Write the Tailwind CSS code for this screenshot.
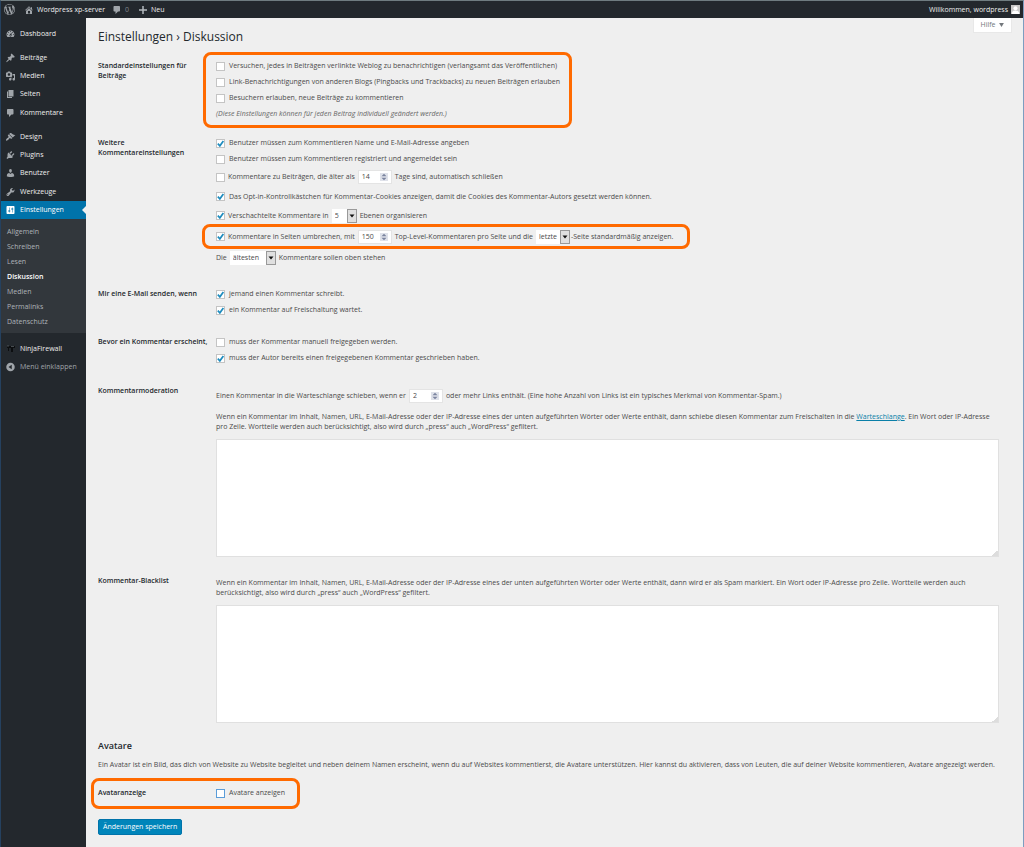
<!DOCTYPE html>
<html lang="de">
<head>
<meta charset="utf-8">
<meta name="viewport" content="width=device-width, initial-scale=1">
<title>Einstellungen › Diskussion</title>
<script src="https://cdn.jsdelivr.net/npm/@tailwindcss/browser@4"></script>
</head>
<body class="min-h-screen flex flex-col bg-[#efefef] border-x border-t border-t-[#6f7c80] border-l-[#25415f] border-r-[#7d9dc0] font-['Open_Sans','Noto_Sans',sans-serif] text-[7px] leading-[10px] text-[#4a4a4a]">

<svg class="hidden" aria-hidden="true">
  <symbol id="check" viewBox="0 0 10 10"><path d="M2 5.200L4.300 7.600L8.200 2.300" fill="none" stroke="#1e8cbe" stroke-width="1.900"/></symbol>
  <symbol id="spin" viewBox="0 0 8 8"><rect width="8" height="8" fill="#dfe2ea"/><path d="M4 .8L6.500 3.300h-5zM4 7.200L6.500 4.700h-5z" fill="#7c85a0"/></symbol>
  <symbol id="comment" viewBox="0 0 20 20"><path d="M5 2h9c1.1 0 2 .9 2 2v7c0 1.1-.9 2-2 2h-2l-5 5v-5H5c-1.1 0-2-.9-2-2V4c0-1.1.9-2 2-2z"/></symbol>
</svg>

<header class="h-[17px] bg-[#23282d] text-[#eee] flex items-center justify-between pl-[3px] pr-[3px]">
  <nav class="flex items-center" aria-label="Werkzeugleiste">
    <a href="#" aria-label="WordPress"><svg class="w-[11px] h-[11px] fill-[#a0a5aa]" viewBox="0 0 20 20"><path d="M20 10c0-5.510-4.490-10-10-10C4.480 0 0 4.490 0 10c0 5.520 4.480 10 10 10 5.510 0 10-4.480 10-10zM7.780 15.370L4.370 6.220c.55-.02 1.170-.08 1.170-.08.5-.06.44-1.130-.06-1.110 0 0-1.450.11-2.370.11-.18 0-.37 0-.58-.01C4.120 2.690 6.870 1.110 10 1.110c2.330 0 4.450.87 6.050 2.340-.68-.11-1.650.39-1.650 1.580 0 .74.45 1.360.9 2.100.35.61.55 1.360.55 2.460 0 1.490-1.400 5-1.400 5l-3.030-8.370c.54-.02.82-.17.82-.17.5-.05.44-1.250-.06-1.220 0 0-1.440.12-2.380.12-.87 0-2.330-.12-2.330-.12-.5-.03-.56 1.200-.06 1.220l.92.08 1.260 3.410zM17.410 10c.24-.64.74-1.870.43-4.250.7 1.290 1.050 2.710 1.050 4.250 0 3.290-1.730 6.240-4.400 7.780.97-2.590 1.940-5.200 2.920-7.780zM6.100 18.090C3.120 16.650 1.110 13.530 1.110 10c0-1.300.23-2.480.72-3.590C3.250 10.300 4.670 14.200 6.100 18.090zm4.030-6.630l2.580 6.980c-.86.29-1.760.45-2.710.45-.79 0-1.570-.11-2.290-.33.81-2.380 1.620-4.740 2.420-7.100z"/></svg></a>
    <a href="#" class="flex items-center gap-[3px] ml-[9px]"><svg class="w-[10px] h-[10px] fill-[#a0a5aa]" viewBox="0 0 20 20"><path d="M16 8.500l1.530 1.530-1.060 1.060L10 4.600l-6.470 6.490-1.060-1.060L10 2.500l4 4v-2h2v4zm-6-2.460l6 5.990V18H4v-5.970zM12 17v-5H8v5h4z"/></svg>Wordpress xp-server</a>
    <a href="#" class="flex items-center gap-[3px] ml-[7px] text-[#80868b]"><svg class="w-[10px] h-[10px] fill-[#a0a5aa]"><use href="#comment"/></svg>0</a>
    <a href="#" class="flex items-center gap-1 ml-[10px]"><svg class="w-[8px] h-[8px]" viewBox="0 0 8 8"><path d="M4 0v8M0 4h8" stroke="#b4b9be" stroke-width="1.500"/></svg>Neu</a>
  </nav>
  <a href="#" class="flex items-center gap-[3px]">Willkommen, wordpress<svg class="w-[9px] h-[9px]" viewBox="0 0 9 9"><rect width="9" height="9" fill="#c8c8c8"/><circle cx="4.500" cy="3.300" r="2" fill="#fff"/><path d="M.8 9c0-3 2-3.500 3.700-3.500S8.200 6 8.200 9z" fill="#fff"/></svg></a>
</header>

<div class="flex flex-1">
  <aside class="w-[85px] shrink-0 bg-[#23282d] text-[#eee] pt-[7px]">
    <nav class="flex flex-col" aria-label="Hauptmenü">
      <a href="#" class="flex items-center gap-1 h-[18px] pl-1 mb-[6px]"><svg class="w-[11px] h-[10px] fill-[#a0a5aa]" viewBox="0 0 20 20"><path d="M3.760 16h12.480c1.100-1.370 1.760-3.110 1.760-5 0-4.420-3.580-8-8-8s-8 3.580-8 8c0 1.890.66 3.630 1.760 5zM10 4c.55 0 1 .45 1 1s-.45 1-1 1-1-.45-1-1 .45-1 1-1zM6 6c.55 0 1 .45 1 1s-.45 1-1 1-1-.45-1-1 .45-1 1-1zm8 0c.55 0 1 .45 1 1s-.45 1-1 1-1-.45-1-1 .45-1 1-1zm-5.370 5.550L12 7v6c0 1.100-.9 2-2 2s-2-.9-2-2c0-.57.24-1.080.63-1.450zM4 10c.55 0 1 .45 1 1s-.45 1-1 1-1-.45-1-1 .45-1 1-1zm12 0c.55 0 1 .45 1 1s-.45 1-1 1-1-.45-1-1 .45-1 1-1zm-5 3c0-.55-.45-1-1-1s-1 .45-1 1 .45 1 1 1 1-.45 1-1z"/></svg>Dashboard</a>
      <a href="#" class="flex items-center gap-1 h-[18px] pl-1"><svg class="w-[11px] h-[10px] fill-[#a0a5aa]" viewBox="0 0 20 20"><path d="M10.440 3.020l1.820-1.820 6.360 6.350-1.830 1.820c-1.050-.68-2.480-.57-3.410.36l-.75.75c-.92.93-1.040 2.350-.35 3.410l-1.830 1.820-2.410-2.410-2.800 2.790c-.42.42-3.380 2.710-3.800 2.290s1.860-3.390 2.280-3.810l2.790-2.790L4.100 9.360l1.830-1.820c1.050.69 2.480.57 3.400-.36l.75-.75c.93-.92 1.050-2.350.36-3.410z"/></svg>Beiträge</a>
      <a href="#" class="flex items-center gap-1 h-[18px] pl-1"><svg class="w-[11px] h-[10px] fill-[#a0a5aa]" viewBox="0 0 20 20"><path d="M13 11V4c0-.55-.45-1-1-1h-1.670L9 1H5L3.670 3H2c-.55 0-1 .45-1 1v7c0 .55.45 1 1 1h10c.55 0 1-.45 1-1zM7 4.500c1.380 0 2.500 1.120 2.500 2.500S8.380 9.500 7 9.500 4.500 8.380 4.500 7 5.620 4.500 7 4.500zM14 6h5v10.500c0 1.380-1.120 2.500-2.500 2.500S14 17.880 14 16.500s1.120-2.500 2.500-2.500c.17 0 .34.02.5.05V9h-3V6zm-4 8.050V13h2v3.500c0 1.380-1.120 2.500-2.500 2.500S7 17.880 7 16.500 8.120 14 9.500 14c.17 0 .34.02.5.05z"/></svg>Medien</a>
      <a href="#" class="flex items-center gap-1 h-[18px] pl-1"><svg class="w-[11px] h-[10px] fill-[#a0a5aa]" viewBox="0 0 20 20"><path d="M6 15V2h10v13H6zm-1 1h8v2H3V5h2v11z"/></svg>Seiten</a>
      <a href="#" class="flex items-center gap-1 h-[19px] pl-1 mb-[6px]"><svg class="w-[11px] h-[10px] fill-[#a0a5aa]"><use href="#comment"/></svg>Kommentare</a>
      <a href="#" class="flex items-center gap-1 h-[18px] pl-1"><svg class="w-[11px] h-[10px] fill-[#a0a5aa]" viewBox="0 0 20 20"><path d="M14.480 11.060L7.410 3.990l1.500-1.500c.5-.56 2.300-.47 3.510.32 1.210.8 1.430 1.280 2.910 2.100 1.180.64 2.450 1.260 4.450.85zm-.71.71L6.700 4.700 4.930 6.470c-.39.39-.39 1.020 0 1.410l1.060 1.060c.39.39.39 1.030 0 1.420-.6.6-1.430 1.110-2.210 1.690-.35.26-.7.53-1.010.84C1.430 14.230.4 16.080 1.400 17.070c.99 1 2.840-.03 4.180-1.360.31-.31.58-.66.85-1.020.57-.78 1.080-1.610 1.690-2.210.39-.39 1.020-.39 1.410 0l1.060 1.060c.39.39 1.020.39 1.410 0z"/></svg>Design</a>
      <a href="#" class="flex items-center gap-1 h-[18px] pl-1"><svg class="w-[11px] h-[10px] fill-[#a0a5aa]" viewBox="0 0 20 20"><path d="M13.110 4.360L9.870 7.600 8 5.730l3.240-3.240c.35-.34 1.050-.2 1.560.32.52.51.66 1.210.31 1.550zm-8 1.770l.91-1.120 9.010 9.010-1.190.84c-.71.71-2.630 1.160-3.820 1.160H6.140L4.900 17.260c-.59.59-1.540.59-2.120 0-.59-.58-.59-1.530 0-2.120l1.240-1.240v-3.880c0-1.130.4-3.190 1.090-3.890zm7.260 3.970l3.240-3.240c.34-.35 1.040-.21 1.550.31.52.51.66 1.210.31 1.550l-3.240 3.250z"/></svg>Plugins</a>
      <a href="#" class="flex items-center gap-1 h-[18px] pl-1"><svg class="w-[11px] h-[10px] fill-[#a0a5aa]" viewBox="0 0 20 20"><path d="M10 9.250c-2.270 0-2.730-3.440-2.730-3.440C7 4.020 7.820 2 9.970 2c2.160 0 2.980 2.020 2.710 3.810 0 0-.41 3.440-2.680 3.440zm0 2.570L12.720 10c2.390 0 4.520 2.330 4.520 4.530v2.490s-3.650 1.130-7.240 1.130c-3.650 0-7.240-1.130-7.240-1.130v-2.490c0-2.250 1.940-4.480 4.470-4.480z"/></svg>Benutzer</a>
      <a href="#" class="flex items-center gap-1 h-[19px] pl-1"><svg class="w-[11px] h-[10px] fill-[#a0a5aa]" viewBox="0 0 20 20"><path d="M16.680 9.770c-1.340 1.340-3.300 1.670-4.950.99l-5.410 6.520c-.99.99-2.590.99-3.580 0s-.99-2.590 0-3.570l6.520-5.420c-.68-1.650-.35-3.610.99-4.950 1.280-1.280 3.120-1.620 4.720-1.060l-2.890 2.890 2.820 2.820 2.860-2.870c.53 1.580.18 3.390-1.080 4.650zM3.810 16.210c.4.39 1.040.39 1.430 0 .4-.4.4-1.040 0-1.430-.39-.4-1.030-.4-1.430 0-.39.39-.39 1.030 0 1.430z"/></svg>Werkzeuge</a>
      <a href="#" class="flex items-center gap-1 h-[18px] pl-1 bg-[#0073aa] text-white"><svg class="w-[11px] h-[10px] fill-white" viewBox="0 0 20 20"><path d="M18 16V4c0-1.100-.9-2-2-2H4c-1.100 0-2 .9-2 2v12c0 1.100.9 2 2 2h12c1.100 0 2-.9 2-2zM8 11h1c.55 0 1 .45 1 1s-.45 1-1 1H8v1.500c0 .28-.22.5-.5.5s-.5-.22-.5-.5V13H6c-.55 0-1-.45-1-1s.45-1 1-1h1V5.500c0-.28.22-.5.5-.5s.5.22.5.5V11zm5-2h-1c-.55 0-1-.45-1-1s.45-1 1-1h1V5.500c0-.28.22-.5.5-.5s.5.22.5.5V7h1c.55 0 1 .45 1 1s-.45 1-1 1h-1v5.500c0 .28-.22.5-.5.5s-.5-.22-.5-.5V9z"/></svg>Einstellungen<svg class="w-[4px] h-[8px] ml-auto" viewBox="0 0 4 8"><path d="M4 0v8L0 4z" fill="#efefef"/></svg></a>
      <div class="flex flex-col bg-[#32373c] text-[#aeb3b8] pt-[5px] pb-1 mb-[7px]">
        <a href="#" class="flex items-center h-[15px] pl-[6px]">Allgemein</a>
        <a href="#" class="flex items-center h-[15px] pl-[6px]">Schreiben</a>
        <a href="#" class="flex items-center h-[15px] pl-[6px]">Lesen</a>
        <a href="#" class="flex items-center h-[15px] pl-[6px] font-semibold text-white">Diskussion</a>
        <a href="#" class="flex items-center h-[15px] pl-[6px]">Medien</a>
        <a href="#" class="flex items-center h-[15px] pl-[6px]">Permalinks</a>
        <a href="#" class="flex items-center h-[15px] pl-[6px]">Datenschutz</a>
      </div>
      <a href="#" class="flex items-center gap-1 h-[18px] pl-1"><svg class="w-[11px] h-[10px]" viewBox="0 0 11 10"><path d="M2 2h8v2H8v4H6V4H4v3H3V4H2z" fill="#0c0e10"/><path d="M2 2h2M6 2.500h3" stroke="#62686d" stroke-width=".7"/></svg>NinjaFirewall</a>
      <button type="button" class="flex items-center gap-1 h-[18px] pl-1 text-[#a0a5aa]"><svg class="w-[11px] h-[10px]" viewBox="0 0 20 20"><circle cx="10" cy="10" r="8.500" fill="#a0a5aa"/><path d="M12.500 5.500v9L6 10z" fill="#23282d"/></svg>Menü einklappen</button>
    </nav>
  </aside>

  <main class="relative flex-1 pl-3 pr-6 pt-[11px] pb-3">
    <button type="button" class="absolute top-0 right-[11px] h-[15px] w-[39px] bg-white border border-t-0 border-[#e8e8e8] text-[#72777c] flex items-center justify-center gap-1">Hilfe<svg class="w-[5px] h-[4px]" viewBox="0 0 6 5"><path d="M0 0h6L3 5z" fill="#72777c"/></svg></button>
    <h1 class="text-[12px] leading-[16px] text-[#23282d] mb-[13px]">Einstellungen › Diskussion</h1>

    <form>
      <section class="grid grid-cols-[118px_1fr] mb-[13px]">
        <h2 class="pt-[3px] font-semibold text-[#23282d]">Standardeinstellungen für<br>Beiträge</h2>
        <div class="relative justify-self-start">
          <div class="absolute -top-[6px] -bottom-[6px] -left-[13px] -right-3 border-3 border-[#ff6a00] rounded-lg pointer-events-none"></div>
          <label class="flex items-center gap-1 h-4"><input type="checkbox" class="appearance-none w-[9px] h-[9px] bg-white border border-[#c4c4c4]">Versuchen, jedes in Beiträgen verlinkte Weblog zu benachrichtigen (verlangsamt das Veröffentlichen)</label>
          <label class="flex items-center gap-1 h-4"><input type="checkbox" class="appearance-none w-[9px] h-[9px] bg-white border border-[#c4c4c4]">Link-Benachrichtigungen von anderen Blogs (Pingbacks und Trackbacks) zu neuen Beiträgen erlauben</label>
          <label class="flex items-center gap-1 h-4"><input type="checkbox" class="appearance-none w-[9px] h-[9px] bg-white border border-[#c4c4c4]">Besuchern erlauben, neue Beiträge zu kommentieren</label>
          <p class="flex items-center h-4 italic text-[#666]">(Diese Einstellungen können für jeden Beitrag individuell geändert werden.)</p>
        </div>
      </section>

      <section class="grid grid-cols-[118px_1fr] mb-[18px]">
        <h2 class="pt-[3px] font-semibold text-[#23282d]">Weitere<br>Kommentareinstellungen</h2>
        <div class="flex flex-col items-start">
          <label class="flex items-center gap-1 h-4"><span class="grid"><input type="checkbox" checked class="appearance-none col-start-1 row-start-1 w-[9px] h-[9px] bg-white border border-[#c4c4c4]"><svg class="col-start-1 row-start-1 w-[9px] h-[9px]"><use href="#check"/></svg></span>Benutzer müssen zum Kommentieren Name und E-Mail-Adresse angeben</label>
          <label class="flex items-center gap-1 h-4"><input type="checkbox" class="appearance-none w-[9px] h-[9px] bg-white border border-[#c4c4c4]">Benutzer müssen zum Kommentieren registriert und angemeldet sein</label>
          <div class="flex items-center gap-[3px] h-5"><input id="close" type="checkbox" class="appearance-none w-[9px] h-[9px] bg-white border border-[#c4c4c4]"><label for="close">Kommentare zu Beiträgen, die älter als</label><span class="flex items-center h-[14px] w-[34px] bg-white border border-[#e4e4e4] pr-[3px]"><input type="text" inputmode="numeric" aria-label="Tage" value="14" class="w-full min-w-0 pl-[3px] outline-none"><svg class="w-[8px] h-[8px] shrink-0"><use href="#spin"/></svg></span>Tage sind, automatisch schließen</div>
          <label class="flex items-center gap-1 h-[19px]"><span class="grid"><input type="checkbox" checked class="appearance-none col-start-1 row-start-1 w-[9px] h-[9px] bg-white border border-[#c4c4c4]"><svg class="col-start-1 row-start-1 w-[9px] h-[9px]"><use href="#check"/></svg></span>Das Opt-in-Kontrollkästchen für Kommentar-Cookies anzeigen, damit die Cookies des Kommentar-Autors gesetzt werden können.</label>
          <div class="flex items-center gap-[3px] h-[19px]"><span class="grid"><input id="nest" type="checkbox" checked class="appearance-none col-start-1 row-start-1 w-[9px] h-[9px] bg-white border border-[#c4c4c4]"><svg class="col-start-1 row-start-1 w-[9px] h-[9px] pointer-events-none"><use href="#check"/></svg></span><label for="nest">Verschachtelte Kommentare in</label><span class="grid h-[14px] w-[25px]"><select aria-label="Ebenen" class="appearance-none col-start-1 row-start-1 bg-white pl-[3px]"><option>5</option></select><svg class="col-start-1 row-start-1 justify-self-end w-[10px] h-[14px] pointer-events-none" viewBox="0 0 10 14"><rect x=".5" y=".5" width="9" height="13" fill="#e0e0e0" stroke="#999"/><path d="M2.500 5.500h5L5 8.500z" fill="#111"/></svg></span>Ebenen organisieren</div>
          <div class="relative flex items-center gap-[3px] h-[23px]">
            <div class="absolute -top-px -bottom-px -left-[14px] -right-[17px] border-3 border-[#ff6a00] rounded-lg pointer-events-none"></div>
            <span class="grid"><input id="paged" type="checkbox" checked class="appearance-none col-start-1 row-start-1 w-[9px] h-[9px] bg-white border border-[#c4c4c4]"><svg class="col-start-1 row-start-1 w-[9px] h-[9px] pointer-events-none"><use href="#check"/></svg></span><label for="paged">Kommentare in Seiten umbrechen, mit</label><span class="flex items-center h-[14px] w-[34px] bg-white border border-[#e4e4e4] pr-[3px]"><input type="text" inputmode="numeric" aria-label="Kommentare pro Seite" value="150" class="w-full min-w-0 pl-[3px] outline-none"><svg class="w-[8px] h-[8px] shrink-0"><use href="#spin"/></svg></span>Top-Level-Kommentaren pro Seite und die<span class="flex items-center gap-px"><span class="grid h-[14px] w-[34px]"><select aria-label="Standardseite" class="appearance-none col-start-1 row-start-1 bg-white pl-[3px]"><option>letzte</option></select><svg class="col-start-1 row-start-1 justify-self-end w-[10px] h-[14px] pointer-events-none" viewBox="0 0 10 14"><rect x=".5" y=".5" width="9" height="13" fill="#e0e0e0" stroke="#999"/><path d="M2.500 5.500h5L5 8.500z" fill="#111"/></svg></span>-Seite standardmäßig anzeigen.</span></div>
          <div class="flex items-center gap-[3px] h-5"><label for="order">Die</label><span class="grid h-[14px] w-[46px]"><select id="order" class="appearance-none col-start-1 row-start-1 bg-white pl-[3px]"><option>ältesten</option></select><svg class="col-start-1 row-start-1 justify-self-end w-[10px] h-[14px] pointer-events-none" viewBox="0 0 10 14"><rect x=".5" y=".5" width="9" height="13" fill="#e0e0e0" stroke="#999"/><path d="M2.500 5.500h5L5 8.500z" fill="#111"/></svg></span>Kommentare sollen oben stehen</div>
        </div>
      </section>

      <section class="grid grid-cols-[118px_1fr] mb-4">
        <h2 class="pt-[3px] font-semibold text-[#23282d] whitespace-nowrap">Mir eine E-Mail senden, wenn</h2>
        <div class="flex flex-col items-start">
          <label class="flex items-center gap-1 h-4"><span class="grid"><input type="checkbox" checked class="appearance-none col-start-1 row-start-1 w-[9px] h-[9px] bg-white border border-[#c4c4c4]"><svg class="col-start-1 row-start-1 w-[9px] h-[9px]"><use href="#check"/></svg></span>jemand einen Kommentar schreibt.</label>
          <label class="flex items-center gap-1 h-4"><span class="grid"><input type="checkbox" checked class="appearance-none col-start-1 row-start-1 w-[9px] h-[9px] bg-white border border-[#c4c4c4]"><svg class="col-start-1 row-start-1 w-[9px] h-[9px]"><use href="#check"/></svg></span>ein Kommentar auf Freischaltung wartet.</label>
        </div>
      </section>

      <section class="grid grid-cols-[118px_1fr] mb-[17px]">
        <h2 class="pt-[3px] font-semibold text-[#23282d] whitespace-nowrap">Bevor ein Kommentar erscheint,</h2>
        <div class="flex flex-col items-start">
          <label class="flex items-center gap-1 h-4"><input type="checkbox" class="appearance-none w-[9px] h-[9px] bg-white border border-[#c4c4c4]">muss der Kommentar manuell freigegeben werden.</label>
          <label class="flex items-center gap-1 h-4"><span class="grid"><input type="checkbox" checked class="appearance-none col-start-1 row-start-1 w-[9px] h-[9px] bg-white border border-[#c4c4c4]"><svg class="col-start-1 row-start-1 w-[9px] h-[9px]"><use href="#check"/></svg></span>muss der Autor bereits einen freigegebenen Kommentar geschrieben haben.</label>
        </div>
      </section>

      <section class="grid grid-cols-[118px_1fr] mb-4">
        <h2 class="pt-[3px] font-semibold text-[#23282d]">Kommentarmoderation</h2>
        <div class="pt-[3px]">
          <div class="flex items-center gap-[3px] h-[19px] mb-[7px]"><label for="links">Einen Kommentar in die Warteschlange schieben, wenn er</label><span class="flex items-center h-[14px] w-[34px] bg-white border border-[#e4e4e4] pr-[3px]"><input id="links" type="text" inputmode="numeric" value="2" class="w-full min-w-0 pl-[3px] outline-none"><svg class="w-[8px] h-[8px] shrink-0"><use href="#spin"/></svg></span>oder mehr Links enthält. (Eine hohe Anzahl von Links ist ein typisches Merkmal von Kommentar-Spam.)</div>
          <p class="mb-[7px]"><label for="moderation">Wenn ein Kommentar im Inhalt, Namen, URL, E-Mail-Adresse oder der IP-Adresse eines der unten aufgeführten Wörter oder Werte enthält, dann schiebe diesen Kommentar zum Freischalten in die</label> <a href="#" class="text-[#0a7fa8] underline">Warteschlange</a>. Ein Wort oder IP-Adresse<br>pro Zeile. Wortteile werden auch berücksichtigt, also wird durch „press“ auch „WordPress“ gefiltert.</p>
          <textarea id="moderation" class="block w-full h-[118px] bg-white border border-[#e0e0e0] resize-y [&::-webkit-resizer]:bg-[linear-gradient(135deg,white_80%,#ddd_80%)]"></textarea>
        </div>
      </section>

      <section class="grid grid-cols-[118px_1fr] mb-[17px]">
        <h2 class="pt-[3px] font-semibold text-[#23282d]">Kommentar-Blacklist</h2>
        <div class="pt-[5px]">
          <p class="mb-[7px]"><label for="blacklist">Wenn ein Kommentar im Inhalt, Namen, URL, E-Mail-Adresse oder der IP-Adresse eines der unten aufgeführten Wörter oder Werte enthält, dann wird er als Spam markiert. Ein Wort oder IP-Adresse pro Zeile. Wortteile werden auch<br>berücksichtigt, also wird durch „press“ auch „WordPress“ gefiltert.</label></p>
          <textarea id="blacklist" class="block w-full h-[118px] bg-white border border-[#e0e0e0] resize-y [&::-webkit-resizer]:bg-[linear-gradient(135deg,white_80%,#ddd_80%)]"></textarea>
        </div>
      </section>

      <h2 class="text-[9px] leading-[12px] font-semibold text-[#23282d] mb-2">Avatare</h2>
      <p class="mb-[15px]">Ein Avatar ist ein Bild, das dich von Website zu Website begleitet und neben deinem Namen erscheint, wenn du auf Websites kommentierst, die Avatare unterstützen. Hier kannst du aktivieren, dass von Leuten, die auf deiner Website kommentieren, Avatare angezeigt werden.</p>
      <section class="relative inline-grid grid-cols-[118px_auto] mb-[18px]">
        <div class="absolute -top-[7px] -bottom-2 -left-[7px] -right-[15px] border-3 border-[#ff6a00] rounded-lg pointer-events-none"></div>
        <h3 class="pt-[3px] font-semibold text-[#23282d]">Avataranzeige</h3>
        <label class="flex items-center gap-1 h-4"><input type="checkbox" class="appearance-none w-[9px] h-[9px] bg-white border border-[#5b9dd9]">Avatare anzeigen</label>
      </section>
      <div><button type="submit" class="h-4 px-1 rounded-[2px] bg-[#0085ba] border border-[#0073aa] text-white flex items-center">Änderungen speichern</button></div>
    </form>
  </main>
</div>
</body>
</html>
